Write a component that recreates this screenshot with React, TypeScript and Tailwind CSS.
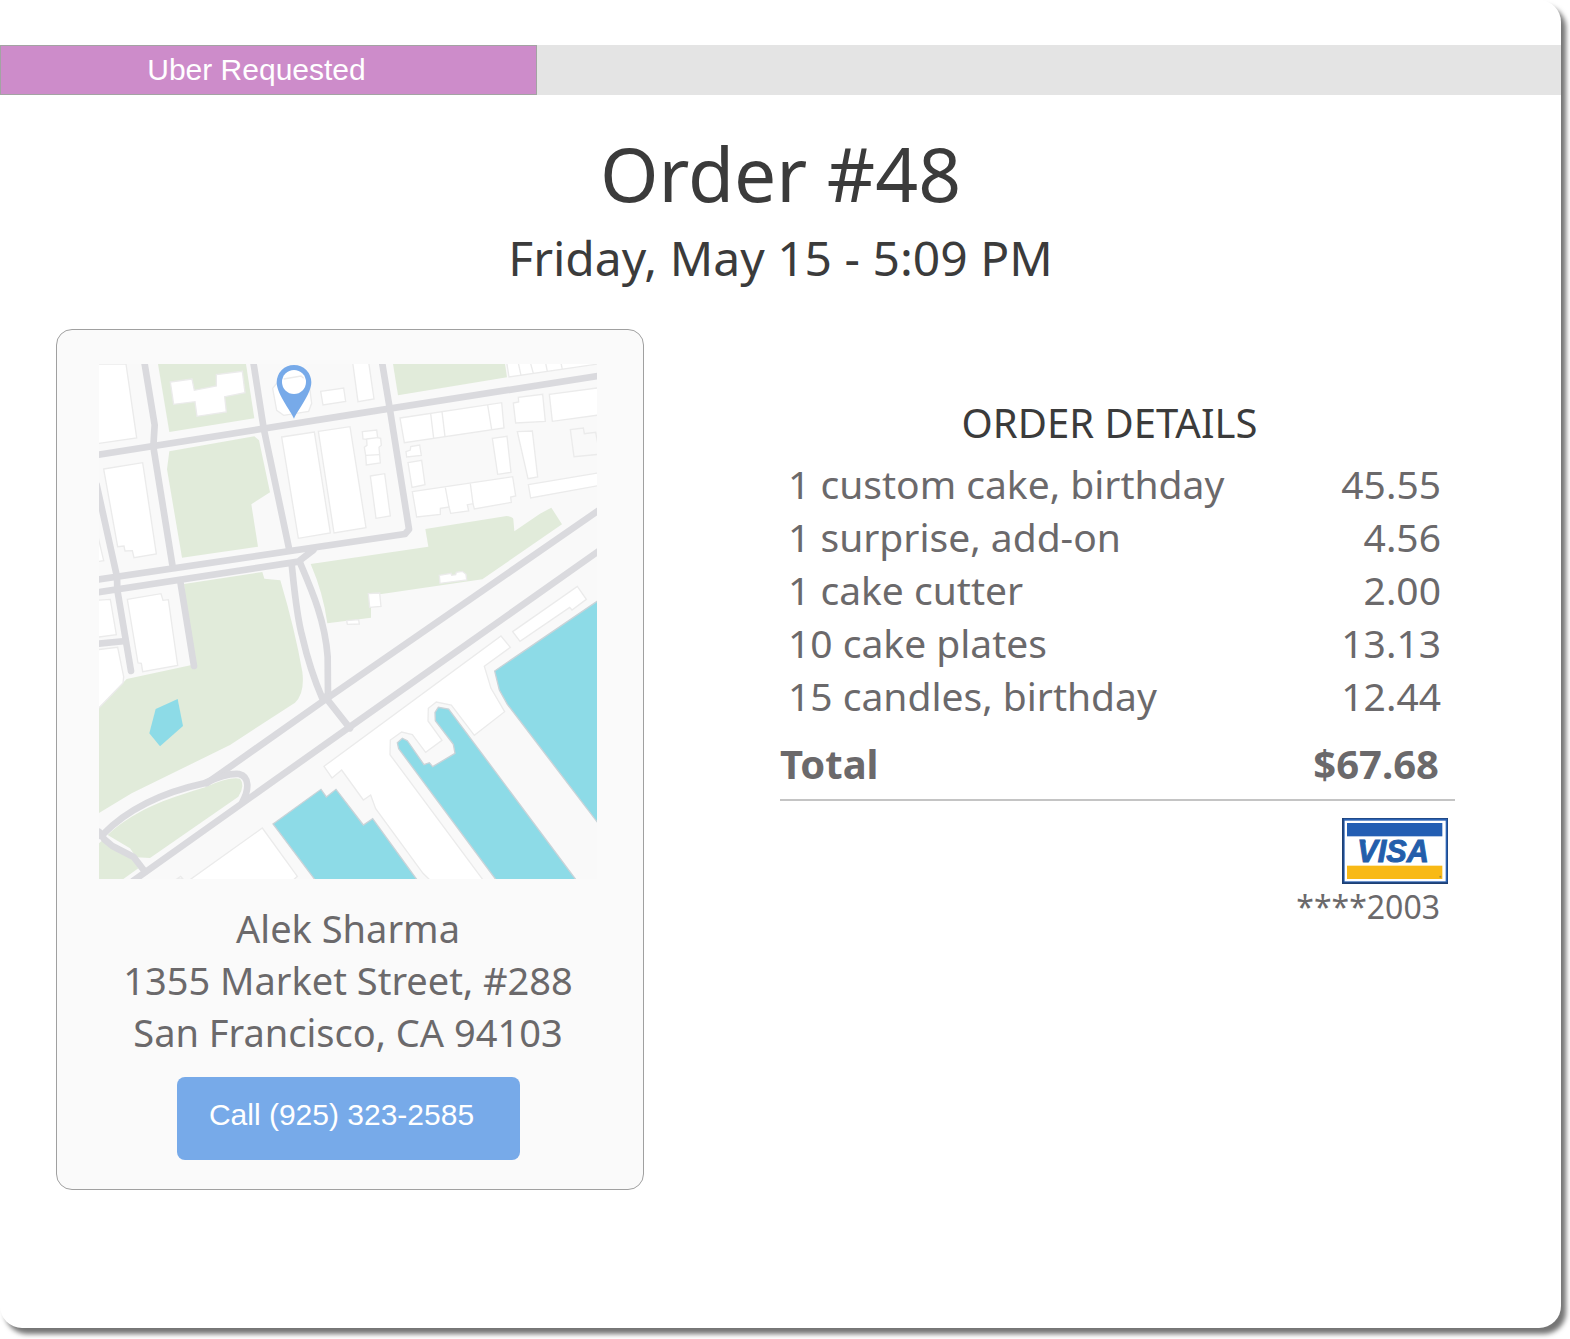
const items = [
  { label: "1 custom cake, birthday", price: "45.55" },
  { label: "1 surprise, add-on", price: "4.56" },
  { label: "1 cake cutter", price: "2.00" },
  { label: "10 cake plates", price: "13.13" },
  { label: "15 candles, birthday", price: "12.44" },
];

const parks = [
  "M189 12 L453 12 L478 175 L223 216 Z",
  "M223 274 L478 229 L492 241 L525 397 L469 433 L489 560 L261 593 L216 328 Z",
  "M894 12 L1230 12 L1236 52 L909 106 Z",
  "M647 612 L1000 560 L991 507 L1235 468 Q1255 470 1255 478 L1258 514 L1335 461 L1369 443 L1401 493 L1162 658 L860 702 L828 702 L828 773 L697 790 Q685 700 647 612 Z",
  "M267 672 L502 636 L508 656 L556 661 Q600 810 622 935 Q630 1000 600 1028 L405 1155 L110 1300 L12 1359 L12 1043 L95 957 L290 915 Z",
  "M38 1425 C130 1340 240 1310 330 1282 Q400 1250 435 1256 Q452 1275 430 1310 L165 1494 L124 1492 L105 1465 Z",
  "M12 1450 L28 1436 L110 1492 L130 1525 L85 1557 L12 1557 Z",
];

const buildings = [
  "M-10 12 L93 12 L125 234 L-10 253 Z",
  "M26 327 L143 308 L184 582 L117 593 L112 572 L90 573 L87 558 L68 560 Z",
  "M-10 450 L26 602 L-10 608 Z",
  "M-10 722 L46 718 L64 824 L-10 834 Z",
  "M97 718 L198 701 L204 721 L220 719 L248 916 L143 935 L139 910 L129 909 Z",
  "M-10 871 L68 862 L86 950 L84 969 L-10 1066 Z",
  "M226 66 L291 57 L298 91 L364 78 L364 44 L442 34 L450 98 L389 110 L394 156 L306 169 L300 125 L236 133 Z",
  "M533 85 L545 70 L618 48 L625 55 L640 52 L650 130 L641 154 L566 166 L545 151 Z",
  "M677 94 L746 84 L752 124 L684 135 Z",
  "M772 0 L820 0 L837 117 L789 125 Z",
  "M560 231 L658 216 L706 519 L610 535 Z",
  "M670 214 L765 200 L813 503 L717 519 Z",
  "M802 215 L845 210 L848 233 L857 235 L859 256 L852 262 L856 309 L814 315 L812 286 L808 262 L816 256 L815 238 L804 237 Z",
  "M814 237 L848 233 M812 286 L853 284",
  "M826 348 L869 341 L886 468 L843 475 Z",
  "M915 174 L1220 128 L1227 204 L928 248 Z",
  "M1007 161 L1016 235 M1041 155 L1050 230 M1178 135 L1190 209",
  "M933 275 L946 270 L947 260 L974 255 L979 286 L935 291 Z",
  "M939 308 L980 301 L990 374 L951 382 Z",
  "M952 395 L1253 350 L1262 408 L1247 411 L1249 427 L1138 447 L1134 431 L1117 434 L1121 453 L1067 460 L1062 441 L1036 445 L1036 463 L965 471 Z",
  "M1051 383 L1062 441 M1126 371 L1134 431",
  "M1192 235 L1236 229 L1248 337 L1208 343 Z",
  "M1255 129 L1271 126 L1270 112 L1343 103 L1351 184 L1262 189 Z",
  "M1363 103 L1520 82 L1520 164 L1372 184 Z",
  "M1267 215 L1312 213 L1328 351 L1299 356 Z",
  "M1300 374 L1520 337 L1520 375 L1307 414 Z",
  "M1234 0 L1510 -20 L1510 12 L1242 51 Z",
  "M1268 0 L1278 46 M1304 0 L1315 40 M1350 0 L1357 34 M1396 0 L1402 28",
  "M1033 646 L1068 640 L1070 646 L1082 644 L1084 637 L1102 634 L1113 643 L1115 660 L1035 670 Z",
  "M820 701 L854 699 L858 739 L824 742 Z",
  "M755 782 L791 779 L793 792 L757 793 Z",
  "M1253 815 L1447 679 L1474 718 L1431 750 L1424 742 L1275 844 Z",
  "M285 1559 L502 1404 L607 1549 L595 1560 Z",
  "M245 1557 L257 1549 L264 1557 Z",
  "M687 1219 L1218 828 L1246 862 L1168 919 L1188 985 L1229 1055 L1138 1126 L1069 1035 L1024 1026 L1000 1045 L999 1083 L1041 1141 L992 1177 L952 1124 L920 1116 L886 1140 L885 1184 L1168 1565 L1010 1565 L984 1540 L842 1346 L827 1305 L805 1320 L740 1230 L711 1254 Z",
];

const water = [
  "M182 1047 L248 1017 L264 1098 L195 1159 L163 1120 Z",
  "M534 1392 L678 1288 L694 1311 L723 1288 L805 1395 L833 1376 L968 1562 L662 1562 Z",
  "M907 1148 L922 1135 L937 1142 L987 1214 L1003 1208 L1013 1220 L1080 1180 L1075 1153 L1021 1082 L1020 1057 L1030 1042 L1061 1047 L1445 1562 L1205 1562 L911 1166 Z",
  "M1199 933 L1515 718 L1515 1397 L1237 1033 L1213 990 Z",
];

const roads = [
  "M0 286 L750 167 L1520 46",
  "M147 0 L179 195 L175 260 L233 620",
  "M474 0 L506 205 L583 570",
  "M860 0 L885 150 L942 508 L930 522 L0 660",
  "M0 698 L610 605 L655 570",
  "M5 375 L66 650 L67 690 L108 933",
  "M0 852 L92 843",
  "M256 665 L297 918",
  "M590 612 C598 690 605 770 622 830 Q645 930 682 1015",
  "M615 608 C650 690 690 780 698 890 L699 1015",
  "M1520 445 L690 1019 L335 1270",
  "M1520 567 L765 1100 L115 1562",
  "M690 1010 L765 1105",
  "M0 1430 L22 1425 C95 1350 190 1300 328 1270 C370 1250 405 1240 432 1242 C465 1250 462 1290 442 1326",
  "M12 1415 L28 1438 L52 1458 L116 1491 L150 1535",
];

function DeliveryMap() {
  return (
    <svg viewBox="12 12 1494 1545" className="block w-full" role="img" aria-label="Map of the delivery address">
      <rect x="12" y="12" width="1494" height="1545" fill="#f9f9f9" />
      <g fill="#e1ebda">
        {parks.map((d) => (
          <path key={d} d={d} />
        ))}
      </g>
      <g fill="#ffffff" stroke="#ebebeb" strokeWidth="4">
        {buildings.map((d) => (
          <path key={d} d={d} />
        ))}
        <path d="M1510 283 L1437 290 L1426 209 L1465 204 L1468 221 L1502 217 L1510 260" fill="none" />
      </g>
      <g fill="#8ddbe7" stroke="#c9d3d8" strokeWidth="4">
        <path d={water[0]} stroke="none" />
        {water.slice(1).map((d) => (
          <path key={d} d={d} />
        ))}
      </g>
      <g fill="none" stroke="#dadade" strokeWidth="20" strokeLinecap="round" strokeLinejoin="round">
        {roads.map((d) => (
          <path key={d} d={d} />
        ))}
      </g>
      <path
        fill="#77aae9"
        d="M597 176 C587 152 545 102 545 67 A52 52 0 0 1 649 67 C649 102 607 152 597 176 Z"
      />
      <circle cx="597" cy="66" r="36" fill="#ffffff" />
      <path d="M566 57 L618 48 L626 55" fill="none" stroke="#ebebeb" strokeWidth="4" />
    </svg>
  );
}

function VisaCard() {
  return (
    <svg viewBox="0 0 318 198" className="block w-[106px]" role="img" aria-label="Visa">
      <rect width="318" height="198" fill="#1d3f73" />
      <rect x="5" y="2" width="311" height="191" fill="#2a62b4" />
      <rect x="8" y="8" width="303" height="182" fill="#ffffff" />
      <rect x="15" y="15" width="286" height="40" fill="#235eb3" />
      <rect x="15" y="143" width="286" height="40" fill="#f8b916" />
      <text
        x="153"
        y="131"
        textAnchor="middle"
        fontSize="92"
        fontWeight="700"
        fontStyle="italic"
        fontFamily="'Liberation Sans', sans-serif"
        fill="#235eab"
        stroke="#235eab"
        strokeWidth="3"
      >
        VISA
      </text>
      <path d="M51 65 H70 L72 74 Z" fill="#235eab" />
      <circle cx="295" cy="176" r="3" fill="#a58a3c" />
    </svg>
  );
}

export default function App() {
  return (
    <div className="bg-white pr-[9px] pb-[11px] font-['Noto_Sans',sans-serif] text-[#6b696b]">
      <main className="overflow-hidden rounded-[22px] bg-white pt-[45px] pb-[138px] shadow-[5px_6px_5px_#757575]">
        <div className="h-[50px] bg-[#e4e4e4]">
          <div className="flex h-full w-[34.4%] items-center justify-center border border-[#a3a3a3] bg-[#cd8cca] pr-6 pb-0.5 font-['Liberation_Sans',sans-serif] text-[30px] text-white">
            Uber Requested
          </div>
        </div>

        <header className="pt-[25px] text-center text-[#3b3b3b]">
          <h1 className="text-[75px] leading-[106px]">Order #48</h1>
          <p className="text-[48px] leading-[64px]">Friday, May 15 - 5:09 PM</p>
        </header>

        <div className="mt-[39px] grid grid-cols-[588fr_675fr] items-start gap-x-[136px] pr-[106px] pl-14">
          <section className="rounded-2xl border border-[#a0a0a0] bg-[#fafafa] pt-[34px] pr-[46px] pb-[29px] pl-[42px]">
            <DeliveryMap />
            <address className="mt-[23px] text-center text-[38px] leading-[52px] whitespace-nowrap not-italic">
              Alek Sharma
              <br />
              1355 Market Street, #288
              <br />
              San Francisco, CA 94103
            </address>
            <button
              type="button"
              className="mx-auto mt-[19px] block h-[83px] w-[343px] rounded-lg bg-[#77aae9] pr-[13px] pb-2 font-['Liberation_Sans',sans-serif] text-[30px] text-white"
            >
              Call (925) 323-2585
            </button>
          </section>

          <section className="pt-[67px]">
            <h2 className="pr-4 text-center text-[40px] leading-[54px] text-[#3b3b3b]">ORDER DETAILS</h2>
            <table className="mt-[7px] w-full text-[39px] leading-[53px]">
              <tbody>
                {items.map((item) => (
                  <tr key={item.label}>
                    <td className="pl-2 text-left">{item.label}</td>
                    <td className="pr-3.5 text-right">{item.price}</td>
                  </tr>
                ))}
              </tbody>
              <tfoot>
                <tr className="border-b-2 border-[#c4c4c4] text-[40px] font-bold">
                  <th scope="row" className="pt-[15px] pb-[9px] text-left">
                    Total
                  </th>
                  <td className="pt-[15px] pr-4 pb-[9px] text-right">$67.68</td>
                </tr>
              </tfoot>
            </table>
            <div className="mt-[17px] flex flex-col items-end pr-[7px]">
              <VisaCard />
              <p className="pr-2 text-[32px] leading-[46px]">****2003</p>
            </div>
          </section>
        </div>
      </main>
    </div>
  );
}
